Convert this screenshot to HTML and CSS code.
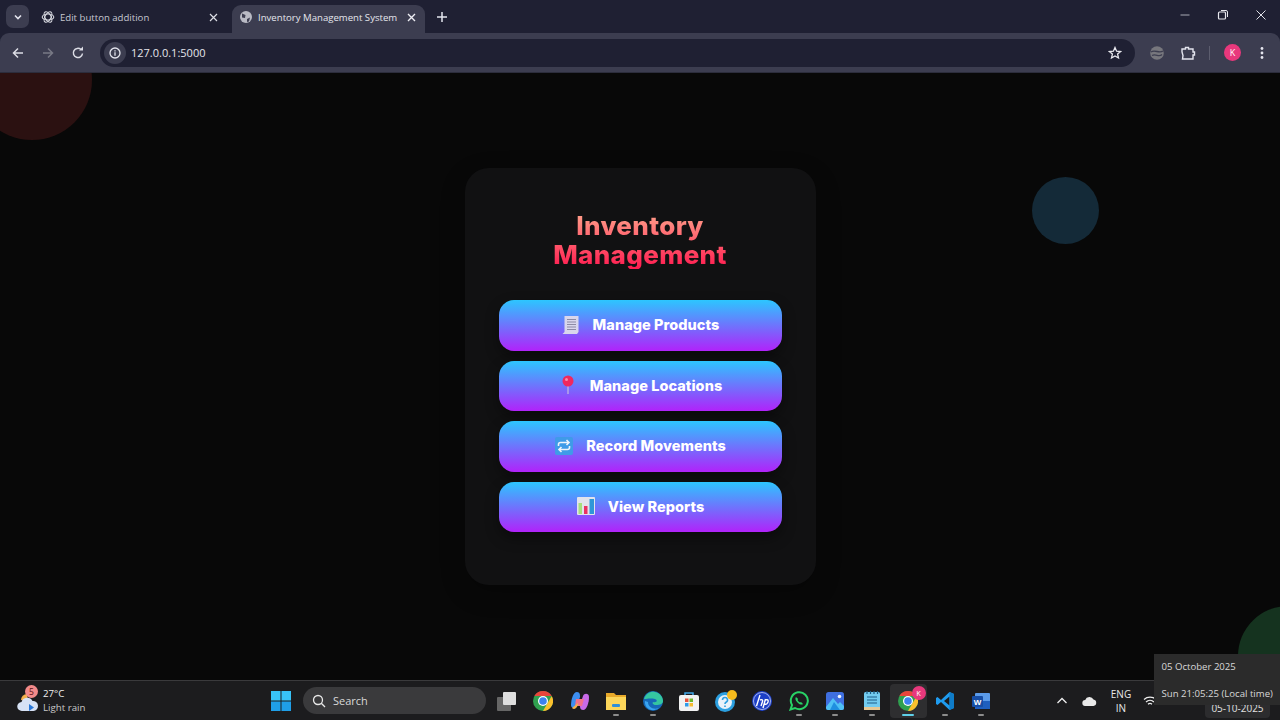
FILE: index.html
```html
<!DOCTYPE html>
<html lang="en">
<head>
<meta charset="utf-8">
<title>Inventory Management System</title>
<link rel="stylesheet" href="styles.css">
</head>
<body>
<header class="chrome">
  <div class="tabstrip">
    <div class="tab-search"><svg width="10" height="10" viewBox="0 0 10 10"><path d="M2 3.500 5 6.500 8 3.500" fill="none" stroke="#e4e5ee" stroke-width="1.600"/></svg></div>
    <div class="tab">
      <svg class="fav" width="14" height="14" viewBox="0 0 14 14"><g fill="none" stroke="#d8d9e0" stroke-width="1.100"><ellipse cx="7" cy="7" rx="5.800" ry="3"/><ellipse cx="7" cy="7" rx="5.800" ry="3" transform="rotate(60 7 7)"/><ellipse cx="7" cy="7" rx="5.800" ry="3" transform="rotate(120 7 7)"/></g></svg>
      <span class="tab-title">Edit button addition</span>
      <svg class="tab-x" width="9" height="9" viewBox="0 0 9 9"><path d="M1 1l7 7M8 1 1 8" stroke="#dcdde5" stroke-width="1.200"/></svg>
    </div>
    <div class="tab tab-active">
      <svg class="fav" width="14" height="14" viewBox="0 0 14 14"><circle cx="7" cy="7" r="6" fill="#b9bac4"/><path d="M3 3.500 6.500 5 6 8 3 7.500ZM8 9l3-1.500-1 4-2 .5Z" fill="#3c3d50"/></svg>
      <span class="tab-title">Inventory Management System</span>
      <svg class="tab-x" width="9" height="9" viewBox="0 0 9 9"><path d="M1 1l7 7M8 1 1 8" stroke="#eeeef4" stroke-width="1.400"/></svg>
    </div>
    <div class="newtab"><svg width="12" height="12" viewBox="0 0 12 12"><path d="M6 1v10M1 6h10" stroke="#e4e5ee" stroke-width="1.500"/></svg></div>
    <div class="winctl">
      <svg width="12" height="12" viewBox="0 0 12 12"><path d="M1.500 6h9" stroke="#a9aab5" stroke-width="1"/></svg>
      <svg width="12" height="12" viewBox="0 0 12 12"><rect x="1.500" y="3" width="7" height="7" rx="1" fill="none" stroke="#e8e8ee" stroke-width="1.200"/><path d="M4 1.500h5a1.500 1.500 0 0 1 1.500 1.500v5" fill="none" stroke="#e8e8ee" stroke-width="1"/></svg>
      <svg width="12" height="12" viewBox="0 0 12 12"><path d="M1.500 1.500l9 9M10.500 1.500l-9 9" stroke="#e0e1e8" stroke-width="1"/></svg>
    </div>
  </div>
  <div class="toolbar">
    <svg class="nav" width="14" height="14" viewBox="0 0 14 14"><path d="M12 7H2.500M7 2.500 2.500 7 7 11.500" fill="none" stroke="#dcdde5" stroke-width="1.500"/></svg>
    <svg class="nav" width="14" height="14" viewBox="0 0 14 14"><path d="M2 7h9.500M7 2.500 11.500 7 7 11.500" fill="none" stroke="#787985" stroke-width="1.500"/></svg>
    <svg class="nav" width="14" height="14" viewBox="0 0 14 14"><path d="M11.500 7.500A4.600 4.600 0 1 1 10 3.500" fill="none" stroke="#dcdde5" stroke-width="1.500"/><path d="M8 4.500h4v-4Z" fill="#dcdde5"/></svg>
    <div class="omnibox">
      <span class="site-info"><svg width="14" height="14" viewBox="0 0 14 14"><circle cx="7" cy="7" r="5" fill="none" stroke="#e4e5ee" stroke-width="1.300"/><path d="M7 6.300v3.400M7 4.200v1.200" stroke="#e4e5ee" stroke-width="1.300"/></svg></span>
      <span class="url">127.0.0.1:5000</span>
      <svg class="star" width="14" height="14" viewBox="0 0 14 14"><path d="M7 1.500 8.600 5.200 12.600 5.500 9.600 8.100 10.500 12 7 9.900 3.500 12 4.400 8.100 1.400 5.500 5.400 5.200Z" fill="none" stroke="#e8e8ee" stroke-width="1.300"/></svg>
    </div>
    <div class="tools">
      <svg width="16" height="16" viewBox="0 0 16 16"><circle cx="8" cy="8" r="6.800" fill="#77777d"/><path d="M2 7C6 4 10 9 14 6M3 10.500c4-2 7 2 10-1" fill="none" stroke="#3d3e50" stroke-width="1.300"/></svg>
      <svg class="ext" width="16" height="16" viewBox="0 0 16 16"><path d="M2 4h3.500V2.500h3V4H13v3h1.500v3H13v4H2.500l.5-3.500L2 7Z" fill="none" stroke="#e4e5ee" stroke-width="1.400"/></svg>
      <span class="divider"></span>
      <span class="avatar">K</span>
      <svg class="dots" width="4" height="14" viewBox="0 0 4 14"><circle cx="2" cy="2.500" r="1.400" fill="#e4e5ee"/><circle cx="2" cy="7" r="1.400" fill="#e4e5ee"/><circle cx="2" cy="11.500" r="1.400" fill="#e4e5ee"/></svg>
    </div>
  </div>
</header>

<main class="page">
  <span class="blob blob-red"></span>
  <span class="blob blob-blue"></span>
  <span class="blob blob-green"></span>
  <section class="card">
    <h1 class="title">Inventory Management</h1>
    <nav class="actions">
      <a class="btn"><svg width="20" height="20" viewBox="0 0 20 20"><path d="M3.500 1h14v16l-1.500 2H1.500l2-2Z" fill="#d9d6ec"/><path d="M6 4.500h9M6 7h9M6 9.500h9M6 12h9M6 14.500h9" stroke="#8d8aa5" stroke-width="1"/></svg><span>Manage Products</span></a>
      <a class="btn"><svg width="20" height="20" viewBox="0 0 20 20"><path d="M10 9v10" stroke="#b9a8e6" stroke-width="1.500"/><circle cx="10" cy="6" r="5.500" fill="#f0285f"/><circle cx="8.500" cy="4.500" r="1.500" fill="#f98aa8"/></svg><span>Manage Locations</span></a>
      <a class="btn"><svg width="20" height="20" viewBox="0 0 20 20"><rect x="1" y="1" width="18" height="18" rx="2" fill="#3f9be8"/><path d="M4.500 10V8.500A2 2 0 0 1 6.500 6.500h8M12.500 4l2.500 2.500L12.500 9M15.500 10v1.500a2 2 0 0 1-2 2h-8M7.500 11 5 13.500 7.500 16" fill="none" stroke="#eef3fb" stroke-width="1.600"/></svg><span>Record Movements</span></a>
      <a class="btn"><svg width="20" height="20" viewBox="0 0 20 20"><rect x="1" y="1" width="18" height="18" rx="1" fill="#e2e3ec"/><rect x="2.500" y="7" width="3.500" height="11" fill="#a6e07c"/><rect x="8" y="10" width="3.500" height="8" fill="#ea3262"/><rect x="13.500" y="3" width="4.500" height="15" fill="#2f97d8"/></svg><span>View Reports</span></a>
    </nav>
  </section>
</main>

<footer class="taskbar">
  <div class="weather">
    <span class="weather-icon">
      <svg width="24" height="24" viewBox="0 0 24 24"><path d="M5 11a6 6 0 0 1 6-6l1 7Z" fill="#f2b04a"/><path d="M6 22a4.500 4.500 0 0 1-.5-9 6 6 0 0 1 11-1 5 5 0 0 1 1 10Z" fill="#d7e2f5"/><path d="M13 15l5 3.500-5 3.500Z" fill="#2a78d8"/></svg>
      <span class="badge">5</span>
    </span>
    <span class="weather-text"><b>27°C</b><i>Light rain</i></span>
  </div>
  <div class="center">
    <svg class="start" width="20" height="20" viewBox="0 0 20 20"><rect width="9.500" height="9.500" fill="#38c3f7"/><rect x="10.500" width="9.500" height="9.500" fill="#38c3f7"/><rect y="10.500" width="9.500" height="9.500" fill="#1f9fe8"/><rect x="10.500" y="10.500" width="9.500" height="9.500" fill="#1f9fe8"/></svg>
    <div class="search">
      <svg width="14" height="14" viewBox="0 0 14 14"><circle cx="6" cy="6" r="4.500" fill="none" stroke="#e8e8e8" stroke-width="1.300"/><path d="M9.300 9.300 13 13" stroke="#e8e8e8" stroke-width="1.300"/></svg>
      <span>Search</span>
    </div>
    <div class="apps">
      <span class="app"><svg width="20" height="20" viewBox="0 0 20 20"><rect x="0" y="6" width="14" height="14" rx="1" fill="#666"/><rect x="6" y="1" width="13" height="13" rx="1" fill="#dedede"/></svg></span>
      <span class="app"><svg width="20" height="20" viewBox="0 0 20 20"><circle cx="10" cy="10" r="10" fill="#2fa04f"/><path d="M10 0a10 10 0 0 1 8.700 5H10Z" fill="#e8453c"/><path d="M1.300 5A10 10 0 0 1 10 0v5H6Z" fill="#e8453c"/><path d="M18.700 5A10 10 0 0 1 10 20l4-7Z" fill="#fbc02d"/><circle cx="10" cy="10" r="5" fill="#fff"/><circle cx="10" cy="10" r="3.800" fill="#3b82f0"/></svg></span>
      <span class="app"><svg width="20" height="20" viewBox="0 0 20 20"><path d="M7 1c3 0 3 3 3 5l-3 9c-1 3-6 3-6-1 0-5 2-13 6-13Z" fill="#3d8ef0"/><path d="M13 19c-3 0-3-3-3-5l3-9c1-3 6-3 6 1 0 5-2 13-6 13Z" fill="#c86ae8"/><path d="M6 8h8l-2 7H5Z" fill="#f2708a"/><path d="M8 14c-2 4-4 5-6 3l6-5Z" fill="#f4b04a"/></svg></span>
      <span class="app run"><svg width="20" height="20" viewBox="0 0 20 20"><path d="M0 2h8l2 2h10v15H0Z" fill="#e8a92a"/><path d="M0 6h20v13H0Z" fill="#fcd65a"/><rect x="6" y="13" width="8" height="3" rx="1" fill="#2f8fd8"/></svg></span>
      <span class="app run"><svg width="20" height="20" viewBox="0 0 20 20"><circle cx="10" cy="10" r="10" fill="#1668b8"/><path d="M1 8C3 2 8 0 12 1c5 1 8 5 8 9 0 3-3 4-7 4-3 0-4-2-3-3 4 1 5-2 2-3-5-1-8 0-11 0Z" fill="#35c6a0"/><path d="M5 11c0 5 5 8 11 6-7 5-15 0-14-7Z" fill="#39a4f0"/></svg></span>
      <span class="app"><svg width="20" height="20" viewBox="0 0 20 20"><path d="M6 5V2h8v3" fill="none" stroke="#3fa7e8" stroke-width="1.500"/><rect x="0" y="4" width="20" height="16" rx="2" fill="#f2f2f2"/><rect x="6" y="7.500" width="3.500" height="3.500" fill="#e8543c"/><rect x="10.500" y="7.500" width="3.500" height="3.500" fill="#6cb82c"/><rect x="6" y="12" width="3.500" height="3.500" fill="#2f9be8"/><rect x="10.500" y="12" width="3.500" height="3.500" fill="#f5bb30"/></svg></span>
      <span class="app"><svg width="22" height="22" viewBox="0 0 22 22"><circle cx="10" cy="12" r="10" fill="#2b9fe0"/><circle cx="10" cy="12" r="7" fill="#e8f2fa"/><path d="M7.500 10a2.500 2.500 0 1 1 3.500 2.300c-.7.400-1 1-1 1.700M10 15.500v1.500" fill="none" stroke="#2b9fe0" stroke-width="1.600"/><circle cx="17" cy="5" r="5" fill="#f6bb1d"/></svg></span>
      <span class="app"><svg width="20" height="20" viewBox="0 0 20 20"><circle cx="10" cy="10" r="10" fill="#1d3fc8"/><circle cx="10" cy="10" r="8.500" fill="none" stroke="#fff" stroke-width=".6"/><path d="M8 4 4.500 15M8 9c2-1 3 0 2.500 1.500L9 15M13.500 8 11 17M13.500 9c2-1 3 0 2.500 2l-.5 1c-.5 1-2 1.500-3 1" fill="none" stroke="#fff" stroke-width="1.400"/></svg></span>
      <span class="app run"><svg width="20" height="20" viewBox="0 0 20 20"><path d="M1.500 18.500 3 14a8.500 8.500 0 1 1 3 3Z" fill="none" stroke="#28d366" stroke-width="2"/><path d="M7 6c-1 1-1 3 1.500 5.500S13 14 14 13l-2-2-1 .6C10 11 9 10 8.500 9l.7-1Z" fill="#28d366"/></svg></span>
      <span class="app run"><svg width="18" height="18" viewBox="0 0 18 18"><rect width="18" height="18" rx="2.500" fill="#3f6fe0"/><path d="M0 15 7 6l5 6 2-2 4 4v2a2 2 0 0 1-2 2H2a2 2 0 0 1-2-2Z" fill="#4fc0f5"/><path d="M4 18 8 10l6 8Z" fill="#1f8fe0"/><circle cx="13.500" cy="4.500" r="1.800" fill="#eef4fb"/></svg></span>
      <span class="app run"><svg width="16" height="20" viewBox="0 0 16 20"><rect y="1" width="16" height="18" rx="1.500" fill="#72cbef"/><rect y="16" width="16" height="3" fill="#e6c894"/><path d="M3 0v3M6.500 0v3M10 0v3M13.500 0v3" stroke="#1d5d85" stroke-width="1.200"/><path d="M3 6h10M3 9h10M3 12h10" stroke="#1c5f8a" stroke-width="1.100"/></svg></span>
      <span class="app app-active">
        <svg width="20" height="20" viewBox="0 0 20 20"><circle cx="10" cy="10" r="10" fill="#2fa04f"/><path d="M10 0a10 10 0 0 1 8.700 5H10Z" fill="#e8453c"/><path d="M1.300 5A10 10 0 0 1 10 0v5H6Z" fill="#e8453c"/><path d="M18.700 5A10 10 0 0 1 10 20l4-7Z" fill="#fbc02d"/><circle cx="10" cy="10" r="5" fill="#fff"/><circle cx="10" cy="10" r="3.800" fill="#3b82f0"/></svg>
        <span class="app-badge">K</span>
      </span>
      <span class="app run"><svg width="20" height="20" viewBox="0 0 20 20"><path d="M14.500 1 19 3v14l-4.500 2L6 11 2.500 14 1 13V7l1.500-1L6 9Z" fill="#1f9cf0"/><path d="M14.500 5.500 9 10l5.500 4.500Z" fill="#1c1c1e"/><path d="M14.500 1 19 3v14l-4.500 2Z" fill="#0f7cc8"/></svg></span>
      <span class="app run"><svg width="20" height="20" viewBox="0 0 20 20"><rect x="4" y="2" width="15" height="16" rx="1" fill="#5b9bea"/><rect x="4" y="10" width="15" height="8" fill="#1f5fbf"/><rect x="1" y="5" width="11" height="11" rx="1" fill="#174ea6"/><text class="word-w" x="6.500" y="13.500">W</text></svg></span>
    </div>
  </div>
  <div class="tray">
    <svg class="chev" width="12" height="12" viewBox="0 0 12 12"><path d="M1.500 8 6 3.500 10.500 8" fill="none" stroke="#eee" stroke-width="1.300"/></svg>
    <svg width="15" height="10" viewBox="0 0 15 10"><path d="M3.500 10a3 3 0 0 1-.3-6 4.500 4.500 0 0 1 8.300-.5 3.300 3.300 0 0 1 0 6.500Z" fill="#e8e8e8"/></svg>
    <span class="lang">ENG<br>IN</span>
    <svg class="wifi" width="14" height="12" viewBox="0 0 14 12"><path d="M1 4.500a9 9 0 0 1 12 0M3 7a6 6 0 0 1 8 0M5 9.200a3 3 0 0 1 4 0" fill="none" stroke="#eee" stroke-width="1.200"/></svg>
    <span class="clock">05-10-2025</span>
  </div>
  <div class="tooltip">
    <span>05 October 2025</span>
    <span>Sun 21:05:25 (Local time)</span>
  </div>
</footer>
</body>
</html>
```
FILE: styles.css
```css
* { box-sizing: border-box; }
html, body { height: 100%; }
body {
  margin: 0;
  width: 1280px;
  height: 720px;
  overflow: hidden;
  display: flex;
  flex-direction: column;
  background: #080808;
  font-family: "Open Sans", "Noto Sans", sans-serif;
}

/* Browser chrome */
.chrome { height: 73px; flex: none; background: #1f2033; display: flex; flex-direction: column; }
.tabstrip { height: 33px; flex: none; display: flex; align-items: flex-start; padding: 5px 0 0 6px; position: relative; }
.tab-search { width: 23px; height: 23px; margin-right: 4px; border-radius: 7px; background: #3c3d50; display: flex; align-items: center; justify-content: center; }
.tab { width: 198px; height: 28px; display: flex; align-items: center; padding: 0 13px 4px 8px; color: #c6c7d0; font-size: 9.600px; font-family: "Open Sans", sans-serif; }
.tab-active { width: 193px; background: #3c3d50; border-radius: 9px 9px 0 0; color: #e4e5ec; margin-left: 1px; padding: 0 9px 4px 7px; }
.fav { flex: none; margin-right: 5px; }
.tab-title { flex: 1; white-space: nowrap; overflow: hidden; }
.tab-x { flex: none; }
.newtab { width: 22px; height: 24px; margin-left: 6px; display: flex; align-items: center; justify-content: center; }
.winctl { margin-left: auto; height: 22px; width: 101px; display: flex; align-items: center; justify-content: space-between; padding: 0 13px 0 0; margin-top: -1px; }
.toolbar { height: 40px; flex: none; background: #3c3d50; border-radius: 9px 9px 0 0; display: flex; align-items: center; padding: 0 11px; gap: 16px; border-bottom: 1px solid #2c2d3c; }
.omnibox { width: 1035px; height: 28px; margin-left: -1px; border-radius: 14px; background: #1f2033; display: flex; align-items: center; padding: 0 13px 0 4px; flex: none; }
.site-info { width: 22px; height: 22px; border-radius: 50%; background: #3c3d50; display: flex; align-items: center; justify-content: center; margin-right: 5px; }
.url { flex: 1; color: #e4e5ec; font-size: 11px; font-family: "Open Sans", sans-serif; }
.tools { display: flex; align-items: center; margin-left: -2px; flex: none; }
.ext { margin-left: 15px; }
.divider { width: 1px; height: 14px; margin-left: 13px; background: #5c5d6e; }
.avatar { width: 17px; height: 17px; margin-left: 14px; border-radius: 50%; background: #e8387c; color: #fff; font-size: 9px; display: flex; align-items: center; justify-content: center; font-family: "Open Sans", sans-serif; }
.dots { margin-left: 19px; }

/* Page */
.page { flex: 1; position: relative; overflow: hidden; display: flex; justify-content: center; align-items: flex-start; padding-top: 95px; background: #080808; }
.blob { position: absolute; border-radius: 50%; }
.blob-red { left: -28px; top: -53px; width: 120px; height: 120px; background: #2b1111; }
.blob-blue { left: 1032px; top: 104px; width: 67px; height: 67px; background: #142a38; }
.blob-green { left: 1238px; top: 533px; width: 100px; height: 100px; background: #15331f; }
.card { position: relative; width: 351px; height: 417px; padding: 43px 34px 0; background: #111112; border-radius: 24px; box-shadow: 0 8px 24px rgba(0,0,0,.25); }
.title { width: 200px; margin: 0 auto 31px; text-align: center; font-family: "Inter", "Liberation Sans", sans-serif; font-weight: 800; font-size: 26px; line-height: 29px; letter-spacing: .35px; background: linear-gradient(180deg, #ffa58c 0%, #ff1a4f 100%); -webkit-background-clip: text; background-clip: text; color: transparent; }
.actions { display: flex; flex-direction: column; gap: 10px; }
.btn { height: 50.500px; padding-bottom: 1px; border-radius: 15px; background: linear-gradient(180deg, #2cc6ff 0%, #b122fa 100%); color: #fff; display: flex; align-items: center; justify-content: center; gap: 12px; font-family: "Inter", "Liberation Sans", sans-serif; font-weight: 800; font-size: 14.500px; letter-spacing: .05px; box-shadow: 0 6px 14px rgba(0,0,0,.4); }
.btn svg { flex: none; }

/* Taskbar */
.taskbar { height: 40px; flex: none; background: #1c1c1e; border-top: 1px solid #3a3a3c; position: relative; display: flex; align-items: center; color: #e8e8e8; font-family: "Open Sans", sans-serif; }
.weather { width: 270px; padding-left: 16px; display: flex; align-items: center; gap: 3px; flex: none; }
.weather-icon { position: relative; width: 24px; height: 24px; }
.badge { position: absolute; left: 9px; top: -4px; width: 13px; height: 13px; border-radius: 50%; background: #f28a8a; color: #5a1010; font-size: 8.500px; display: flex; align-items: center; justify-content: center; }
.weather-text { display: flex; flex-direction: column; font-size: 9.700px; line-height: 13.500px; }
.weather-text b { font-weight: 400; color: #f2f2f2; }
.weather-text i { font-style: normal; color: #c8c8c8; }
.center { display: flex; align-items: center; flex: none; }
.start { margin-right: 12px; margin-left: 1px; }
.search { width: 183px; height: 27px; border-radius: 14px; background: #3a3a3c; display: flex; align-items: center; gap: 7px; padding-left: 9px; font-size: 11px; color: #d8d8d8; margin-right: 2.500px; }
.apps { display: flex; align-items: center; }
.app { position: relative; width: 36.500px; height: 34px; display: flex; align-items: center; justify-content: center; }
.run::after, .app-active::after { content: ""; position: absolute; left: 50%; bottom: 2px; width: 6px; height: 2px; margin-left: -3px; border-radius: 1px; background: #8c8c8c; }
.app-active { background: #2e2e30; border-radius: 4px; }
.app-active::after { width: 12px; margin-left: -6px; background: #5fd0e8; }
.app-badge { position: absolute; right: 1px; top: 2px; width: 14px; height: 14px; border-radius: 50%; background: #e8387c; color: #fff; font-size: 7.500px; display: flex; align-items: center; justify-content: center; }
.word-w { font-family: "Liberation Sans", sans-serif; font-size: 8px; font-weight: 700; fill: #fff; text-anchor: middle; }
.tray { position: absolute; left: 1056px; top: 0; height: 39px; display: flex; align-items: center; }
.tray svg { flex: none; }
.chev { margin-right: 14px; }
.lang { margin-left: 9px; width: 30px; text-align: center; font-size: 10px; line-height: 14px; }
.wifi { margin-left: 7px; }
.clock { margin-left: 48px; width: 65px; height: 34px; border-radius: 4px; background: #2c2c2e; display: flex; align-items: flex-end; justify-content: center; padding-bottom: 3px; font-size: 10px; line-height: 14px; color: #e0e0e0; }
.tooltip { position: absolute; left: 1154px; top: -27px; width: 126px; height: 51px; background: #2b2b2b; color: #d8d8d8; font-size: 9.600px; padding: 6px 0 0 7.500px; display: flex; flex-direction: column; gap: 14px; white-space: nowrap; line-height: 13px; }
```
